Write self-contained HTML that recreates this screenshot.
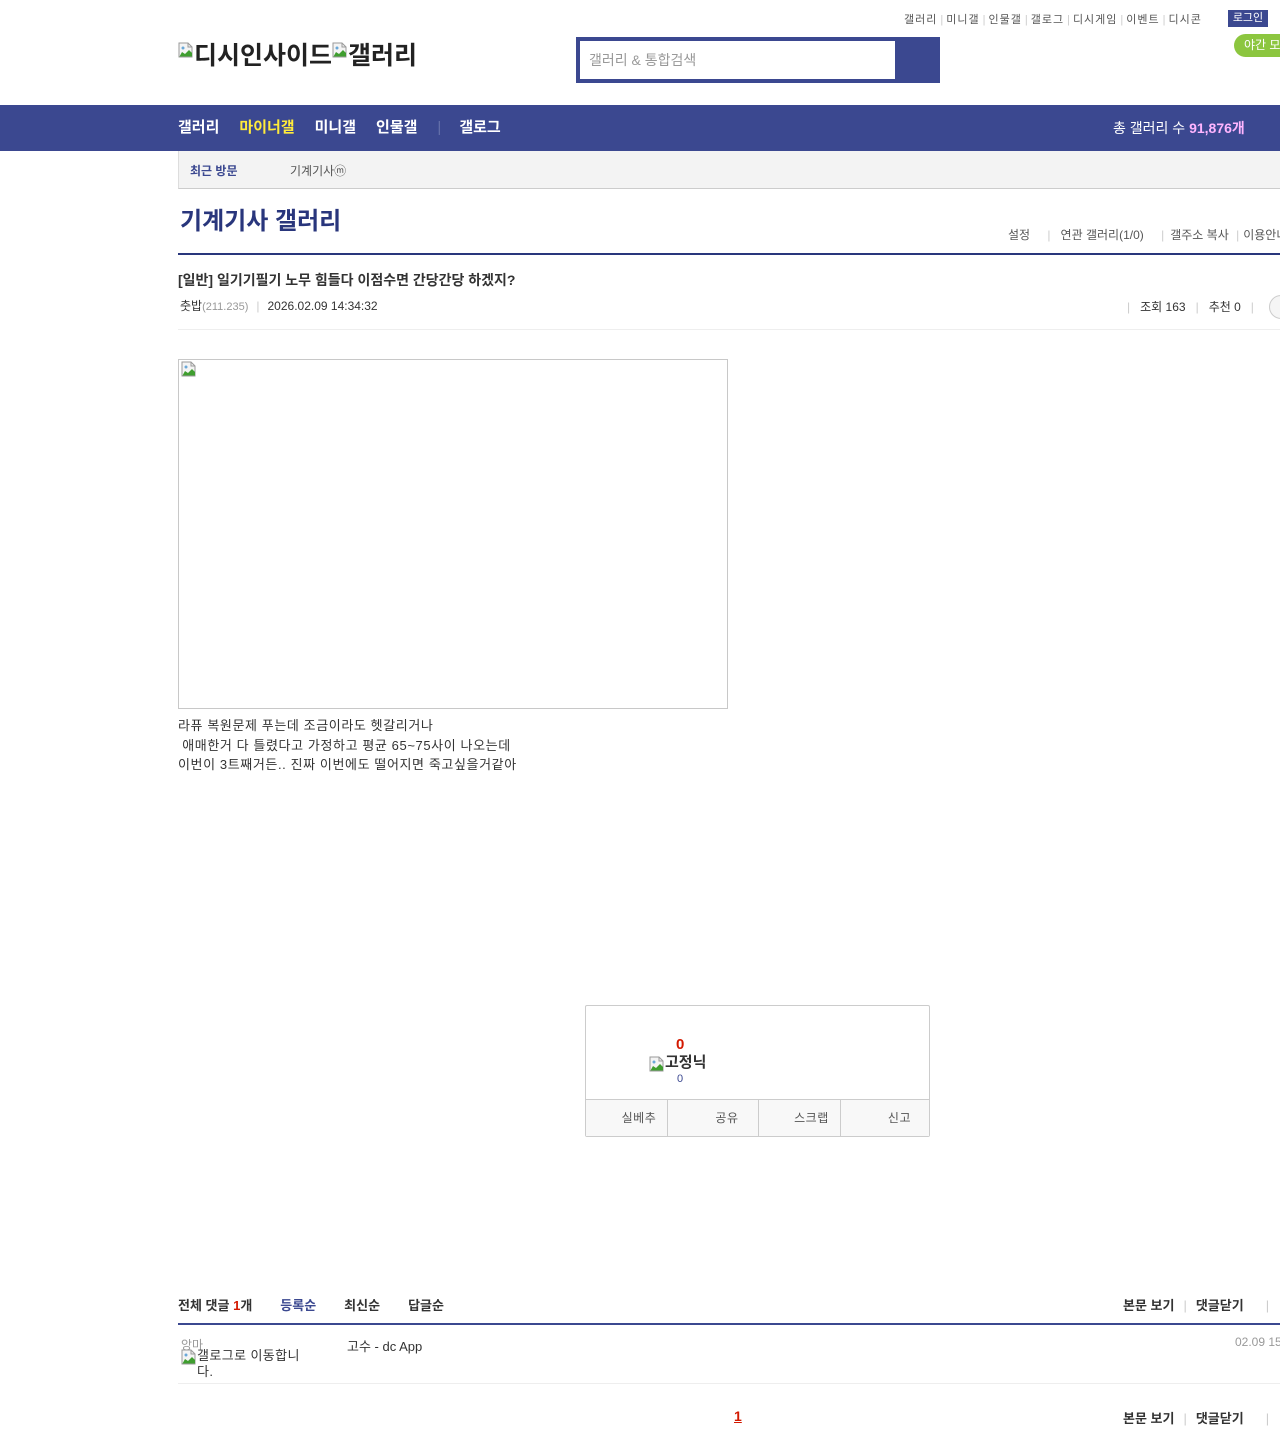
<!DOCTYPE html>
<html><head><meta charset="utf-8"><style>
*{margin:0;padding:0;box-sizing:border-box}
html,body{width:1280px;height:1429px;overflow:hidden;background:#fff}
body{font-family:"Liberation Sans","Noto Sans CJK KR",sans-serif;color:#333;position:relative}
.a{position:absolute;white-space:nowrap}
.bi{display:inline-block;width:16px;height:16px;vertical-align:top;margin-top:2px}
.s{color:#ccc;margin:0 3px;letter-spacing:0}
</style></head><body>
<svg width="0" height="0" style="position:absolute"><defs><symbol id="bi" viewBox="0 0 16 16"><path d="M1 1h9l4 4v10H1z" fill="#f4f4f4" stroke="#9a9a9a"/><path d="M10 1v4h4" fill="none" stroke="#9a9a9a"/><path d="M1.5 14.5L4 10l3 2 4-4 3 3v3.5z" fill="#3f9e2f"/><circle cx="5" cy="6" r="1.5" fill="#6aa8d8"/></symbol></defs></svg>

<div class="a" style="top:11px;left:904px;font-size:11px;color:#555;letter-spacing:1px">갤러리<span class="s">|</span>미니갤<span class="s">|</span>인물갤<span class="s">|</span>갤로그<span class="s">|</span>디시게임<span class="s">|</span>이벤트<span class="s">|</span>디시콘</div>
<div class="a" style="top:10px;left:1228px;width:40px;height:17px;background:#3b4890;color:#fff;font-size:11px;text-align:center;line-height:17px">로그인</div>
<div class="a" style="top:34px;left:1234px;width:60px;height:23px;background:#8cc63f;border-radius:12px;color:#fff;font-size:12px;line-height:23px;padding-left:10px">야간 모드</div>

<div class="a" style="top:40px;left:178px;font-size:25px;font-weight:bold;color:#222;line-height:32px"><svg class="bi"><use href="#bi"/></svg>디시인사이드<svg class="bi"><use href="#bi"/></svg>갤러리</div>

<div class="a" style="top:37px;left:576px;width:364px;height:46px;background:#3b4890"></div>
<div class="a" style="top:41px;left:580px;width:315px;height:38px;background:#fff;font-size:14px;color:#999;line-height:38px;padding-left:9px">갤러리 &amp; 통합검색</div>

<div class="a" style="top:105px;left:0;width:1280px;height:46px;background:#3b4890"></div>
<div class="a" style="top:105px;left:178px;line-height:46px;font-size:15px;font-weight:bold;color:#fff">갤러리<span style="color:#ffeb3b;margin-left:20px">마이너갤</span><span style="margin-left:20px">미니갤</span><span style="margin-left:20px">인물갤</span><span style="color:#6570aa;margin-left:20px;font-weight:normal">|</span><span style="margin-left:18px">갤로그</span></div>
<div class="a" style="top:105px;left:1113px;line-height:46px;font-size:14px;color:#fff">총 갤러리 수 <b style="color:#ffb5ff">91,876개</b></div>

<div class="a" style="top:151px;left:178px;width:1110px;height:38px;background:#f3f3f3;border-left:1px solid #ddd;border-bottom:1px solid #ccc"></div>
<div class="a" style="top:162px;left:190px;font-size:12px;font-weight:bold;color:#3b4890">최근 방문</div>
<div class="a" style="top:162px;left:290px;font-size:12px;color:#555">기계기사ⓜ</div>

<div class="a" style="top:203px;left:180px;font-size:24px;font-weight:bold;color:#29367c;line-height:38px">기계기사 갤러리</div>
<div class="a" style="top:226px;left:1008px;font-size:12px;color:#555">설정 <span style="color:#ccc;margin:0 10px 0 14px">|</span>연관 갤러리(1/0) <span style="color:#ccc;margin:0 6px 0 14px">|</span>갤주소 복사 <span style="color:#ccc;margin:0 4px">|</span>이용안내</div>
<div class="a" style="top:253px;left:178px;width:1110px;height:2px;background:#29367c"></div>

<div class="a" style="top:270px;left:178px;font-size:14px;font-weight:bold;color:#333">[일반] 일기기필기 노무 힘들다 이점수면 간당간당 하겠지?</div>
<div class="a" style="top:297px;left:180px;font-size:12px;color:#333">춧밥<span style="color:#999;font-size:11px">(211.235)</span><span style="color:#ccc;margin:0 8px">|</span>2026.02.09 14:34:32</div>
<div class="a" style="top:298px;left:1127px;font-size:12px;color:#333"><span style="color:#ccc;margin-right:10px">|</span>조회 163<span style="color:#ccc;margin:0 10px">|</span>추천 0<span style="color:#ccc;margin:0 10px">|</span></div>
<div class="a" style="top:295px;left:1269px;width:24px;height:24px;border:1px solid #ccc;border-radius:12px;background:#f5f5f5"></div>
<div class="a" style="top:329px;left:178px;width:1110px;height:1px;background:#eee"></div>

<div class="a" style="top:359px;left:178px;width:550px;height:350px;border:1px solid #c8c8c8"><svg class="bi" style="position:absolute;left:2px;top:1px;margin:0"><use href="#bi"/></svg></div>
<div class="a" style="top:716px;left:178px;font-size:13px;letter-spacing:0.6px;line-height:19.5px;color:#333;white-space:pre">라퓨 복원문제 푸는데 조금이라도 헷갈리거나
 애매한거 다 틀렸다고 가정하고 평균 65~75사이 나오는데
이번이 3트째거든.. 진짜 이번에도 떨어지면 죽고싶을거같아</div>

<div class="a" style="top:1005px;left:585px;width:345px;height:132px;border:1px solid #ccc;border-radius:2px"></div>
<div class="a" style="top:1036px;left:676px;font-size:15px;font-weight:bold;color:#d31900">0</div>
<div class="a" style="top:1053px;left:649px;font-size:15px;font-weight:bold;color:#333;line-height:20px"><svg class="bi" style="margin-top:3px"><use href="#bi"/></svg>고정닉</div>
<div class="a" style="top:1073px;left:677px;font-size:11px;color:#3b4890">0</div>
<div class="a" style="top:1099px;left:586px;width:343px;height:37px;background:#f8f8f8;border-top:1px solid #ccc;display:flex;font-size:12px;color:#555;letter-spacing:0.5px">
<div style="flex:1;border-right:1px solid #ccc;line-height:37px;text-align:right;padding-right:11px">실베추</div>
<div style="flex:1;border-right:1px solid #ccc;line-height:37px;text-align:right;padding-right:19px">공유</div>
<div style="flex:1;border-right:1px solid #ccc;line-height:37px;text-align:right;padding-right:11px">스크랩</div>
<div style="flex:1;line-height:37px;text-align:right;padding-right:18px">신고</div></div>

<div class="a" style="top:1295px;left:178px;font-size:13px;font-weight:bold;color:#333">전체 댓글 <span style="color:#d31900">1</span>개<span style="color:#3b4890;margin-left:28px">등록순</span><span style="margin-left:28px">최신순</span><span style="margin-left:28px">답글순</span></div>
<div class="a" style="top:1295px;left:1123px;font-size:13px;font-weight:bold;color:#333">본문 보기<span style="color:#ccc;font-weight:normal;margin:0 9px">|</span>댓글닫기<span style="color:#ccc;font-weight:normal;margin-left:22px">|</span></div>
<div class="a" style="top:1323px;left:178px;width:1110px;height:2px;background:#3b4890"></div>
<div class="a" style="top:1336px;left:181px;font-size:12px;color:#999">앙마</div>
<div class="a" style="top:1349px;left:181px;font-size:13px;color:#333;line-height:14px;white-space:pre;letter-spacing:0.4px"><svg class="bi" style="margin-top:0"><use href="#bi"/></svg>갤로그로 이동합니
    다.</div>
<div class="a" style="top:1336px;left:347px;font-size:13px;color:#333">고수 - dc App</div>
<div class="a" style="top:1335px;left:1235px;font-size:12px;color:#999">02.09 15:00</div>
<div class="a" style="top:1383px;left:178px;width:1110px;height:1px;background:#eee"></div>
<div class="a" style="top:1408px;left:734px;font-size:14px;font-weight:bold;color:#d31900;text-decoration:underline">1</div>
<div class="a" style="top:1408px;left:1123px;font-size:13px;font-weight:bold;color:#333">본문 보기<span style="color:#ccc;font-weight:normal;margin:0 9px">|</span>댓글닫기<span style="color:#ccc;font-weight:normal;margin-left:22px">|</span></div>
</body></html>
